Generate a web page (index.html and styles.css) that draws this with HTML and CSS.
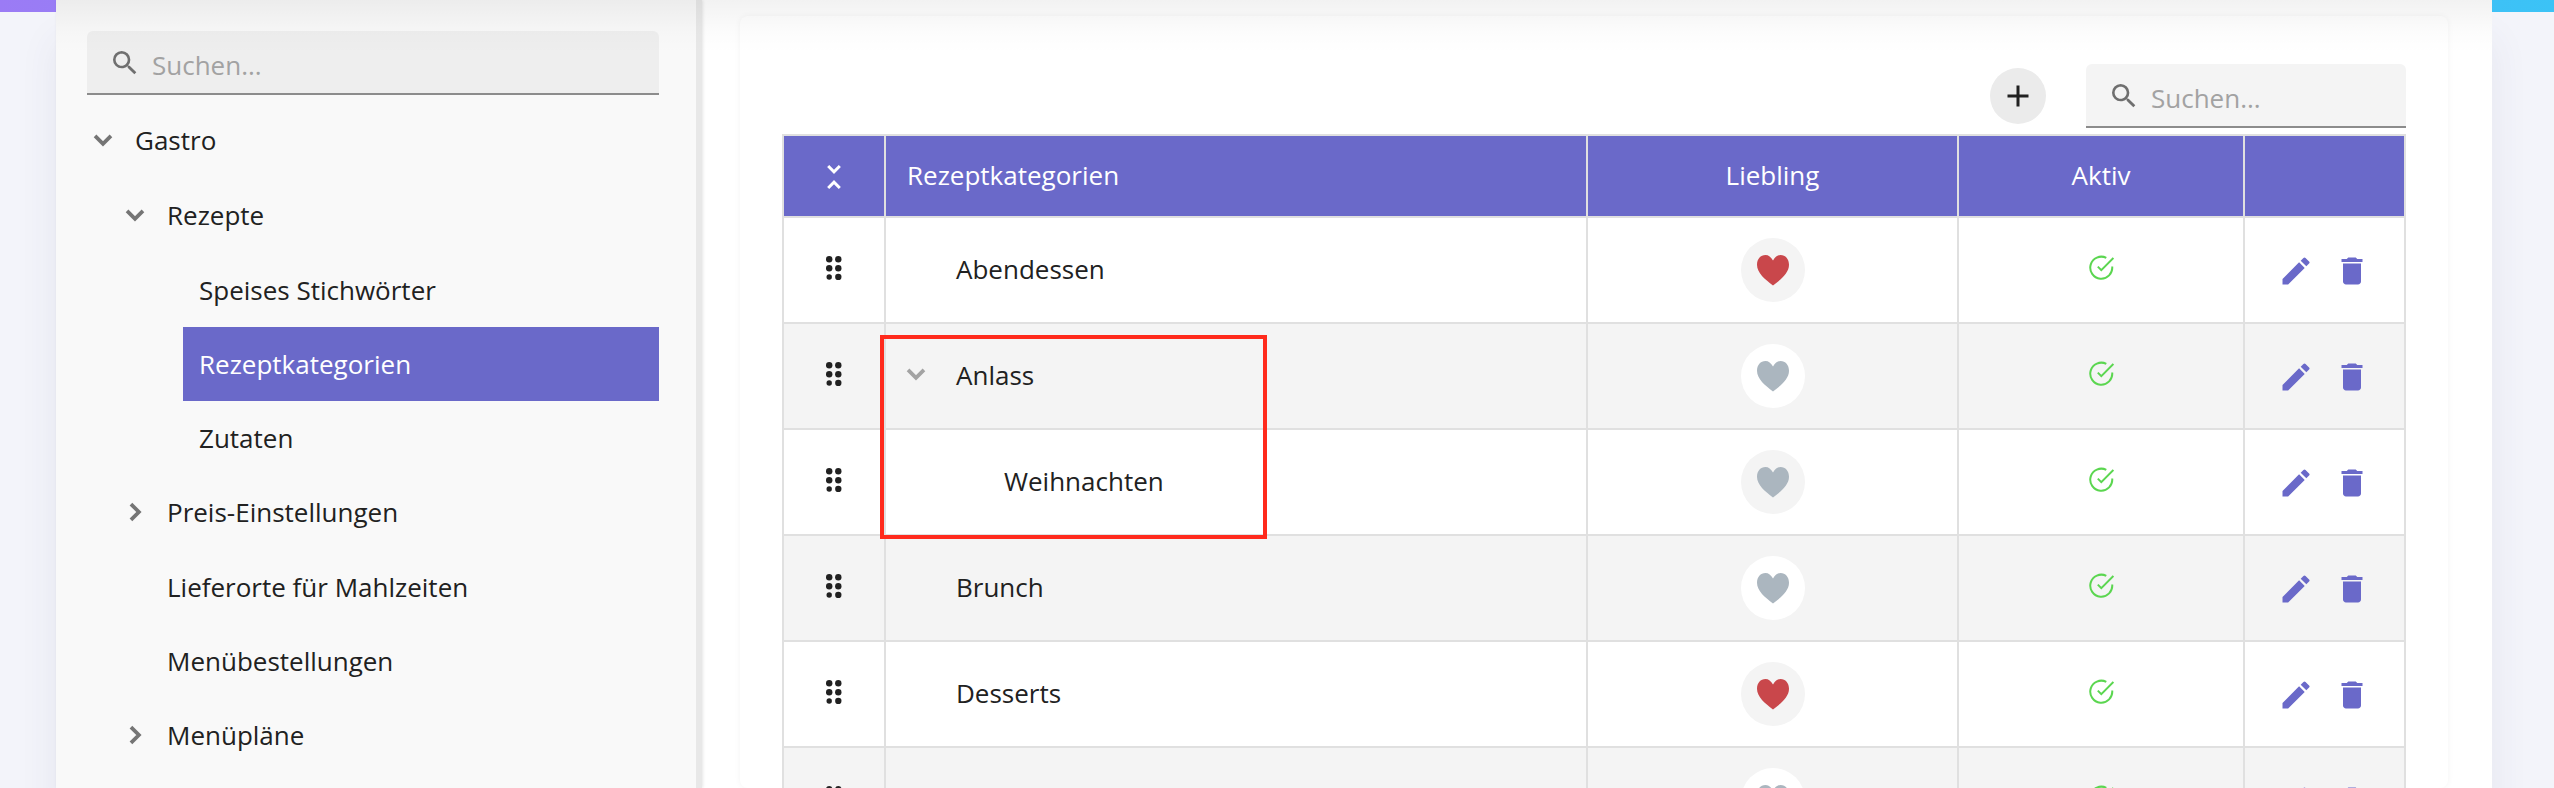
FILE: index.html
```html
<!DOCTYPE html>
<html lang="de">
<head>
<meta charset="utf-8">
<title>Rezeptkategorien</title>
<link rel="stylesheet" href="styles.css">
</head>
<body>
<svg class="sprite" aria-hidden="true">
  <symbol id="search" viewBox="0 0 24 24"><path d="M15.5 14h-.79l-.28-.27A6.471 6.471 0 0 0 16 9.5 6.5 6.5 0 1 0 9.5 16c1.61 0 3.09-.59 4.23-1.57l.27.28v.79l5 4.99L20.49 19l-4.99-5zm-6 0C7.01 14 5 11.99 5 9.5S7.01 5 9.5 5 14 7.01 14 9.5 11.99 14 9.5 14z"/></symbol>
  <symbol id="down" viewBox="0 0 24 24"><path d="M6.700 9.300L12 14.600L17.300 9.300" fill="none" stroke="currentColor" stroke-width="2.500"/></symbol>
  <symbol id="right" viewBox="0 0 24 24"><path d="M9.300 6.700L14.600 12L9.300 17.300" fill="none" stroke="currentColor" stroke-width="2.500"/></symbol>
  <symbol id="plus" viewBox="0 0 24 24"><path d="M19 13h-6v6h-2v-6H5v-2h6V5h2v6h6v2z"/></symbol>
  <symbol id="collapse" viewBox="0 0 24 24"><path d="M7.41 18.59L8.83 20 12 16.83 15.17 20l1.41-1.41L12 14l-4.59 4.59zm9.18-13.18L15.17 4 12 7.17 8.83 4 7.41 5.41 12 10l4.59-4.59z"/></symbol>
  <symbol id="grip" viewBox="0 0 16 24"><circle cx="3.2" cy="3.2" r="3.2"/><circle cx="12.3" cy="3.2" r="3.2"/><circle cx="3.2" cy="12.2" r="3.2"/><circle cx="12.3" cy="12.2" r="3.2"/><circle cx="3.2" cy="21" r="2.7"/><circle cx="12.3" cy="21" r="3.2"/></symbol>
  <symbol id="love" viewBox="0 0 32 31"><path d="M16 5.5C14 2 11.5 0 8.5 0C3.5 0 0 4 0 9.8C0 18 8 24.5 16 30.5C24 24.5 32 18 32 9.8C32 4 28.5 0 23.5 0C20.5 0 18 2 16 5.5Z"/></symbol>
  <symbol id="check" viewBox="0 0 26 26"><path d="M18.3 2.9A11 11 0 1 0 24.2 11.5M9.8 11.6L13.3 15.1L25.4 3" fill="none" stroke="currentColor" stroke-width="2"/></symbol>
  <symbol id="edit" viewBox="0 0 24 24"><path d="M3 17.25V21h3.75L17.81 9.94l-3.75-3.75L3 17.25zM20.71 7.04a1 1 0 0 0 0-1.41l-2.34-2.34a1 1 0 0 0-1.41 0l-1.83 1.83 3.75 3.75 1.83-1.83z"/></symbol>
  <symbol id="trash" viewBox="0 0 24 24"><path d="M6 19c0 1.100.9 2 2 2h8c1.100 0 2-.9 2-2V7H6v12zM19 4h-3.500l-1-1h-5l-1 1H5v2h14V4z"/></symbol>
</svg>

<div class="page">
  <div class="shell">
    <aside class="sidebar">
      <label class="search search-side">
        <svg class="icon-search"><use href="#search"/></svg>
        <input type="text" placeholder="Suchen..." aria-label="Navigation durchsuchen">
      </label>
      <nav>
        <ul class="tree">
          <li>
            <div class="node"><button class="toggle" type="button" aria-label="Gastro zuklappen"><svg class="icon"><use href="#down"/></svg></button><a href="#">Gastro</a></div>
            <ul>
              <li>
                <div class="node"><button class="toggle" type="button" aria-label="Rezepte zuklappen"><svg class="icon"><use href="#down"/></svg></button><a href="#">Rezepte</a></div>
                <ul>
                  <li><a class="leaf" href="#">Speises Stichwörter</a></li>
                  <li><a class="leaf active" href="#" aria-current="page">Rezeptkategorien</a></li>
                  <li><a class="leaf" href="#">Zutaten</a></li>
                </ul>
              </li>
              <li><div class="node"><button class="toggle" type="button" aria-label="Preis-Einstellungen aufklappen"><svg class="icon"><use href="#right"/></svg></button><a href="#">Preis-Einstellungen</a></div></li>
              <li><a class="leaf" href="#">Lieferorte für Mahlzeiten</a></li>
              <li><a class="leaf" href="#">Menübestellungen</a></li>
              <li><div class="node"><button class="toggle" type="button" aria-label="Menüpläne aufklappen"><svg class="icon"><use href="#right"/></svg></button><a href="#">Menüpläne</a></div></li>
            </ul>
          </li>
        </ul>
      </nav>
    </aside>

    <main class="main">
      <section class="card">
        <div class="toolbar">
          <button class="add" type="button" aria-label="Hinzufügen"><svg class="icon"><use href="#plus"/></svg></button>
          <label class="search search-table">
            <svg class="icon-search"><use href="#search"/></svg>
            <input type="text" placeholder="Suchen..." aria-label="Tabelle durchsuchen">
          </label>
        </div>
        <div class="table-wrap">
          <table>
            <colgroup><col class="col-grip"><col><col class="col-fav"><col class="col-active"><col class="col-actions"></colgroup>
            <thead>
              <tr>
                <th><button class="plain" type="button" aria-label="Alle zuklappen"><svg class="icon"><use href="#collapse"/></svg></button></th>
                <th class="name">Rezeptkategorien</th>
                <th>Liebling</th>
                <th>Aktiv</th>
                <th></th>
              </tr>
            </thead>
            <tbody>
              <tr>
                <td><svg class="grip"><use href="#grip"/></svg></td>
                <td class="name"><div class="entry">Abendessen</div></td>
                <td><button class="fav on" type="button" aria-label="Liebling"><svg><use href="#love"/></svg></button></td>
                <td><svg class="check"><use href="#check"/></svg></td>
                <td><div class="actions"><button class="plain" type="button" aria-label="Bearbeiten"><svg class="icon"><use href="#edit"/></svg></button><button class="plain" type="button" aria-label="Löschen"><svg class="icon"><use href="#trash"/></svg></button></div></td>
              </tr>
              <tr>
                <td><svg class="grip"><use href="#grip"/></svg></td>
                <td class="name"><div class="entry parent"><button class="plain expand" type="button" aria-label="Anlass zuklappen"><svg class="icon"><use href="#down"/></svg></button>Anlass</div></td>
                <td><button class="fav" type="button" aria-label="Liebling"><svg><use href="#love"/></svg></button></td>
                <td><svg class="check"><use href="#check"/></svg></td>
                <td><div class="actions"><button class="plain" type="button" aria-label="Bearbeiten"><svg class="icon"><use href="#edit"/></svg></button><button class="plain" type="button" aria-label="Löschen"><svg class="icon"><use href="#trash"/></svg></button></div></td>
              </tr>
              <tr>
                <td><svg class="grip"><use href="#grip"/></svg></td>
                <td class="name"><div class="entry child">Weihnachten</div></td>
                <td><button class="fav" type="button" aria-label="Liebling"><svg><use href="#love"/></svg></button></td>
                <td><svg class="check"><use href="#check"/></svg></td>
                <td><div class="actions"><button class="plain" type="button" aria-label="Bearbeiten"><svg class="icon"><use href="#edit"/></svg></button><button class="plain" type="button" aria-label="Löschen"><svg class="icon"><use href="#trash"/></svg></button></div></td>
              </tr>
              <tr>
                <td><svg class="grip"><use href="#grip"/></svg></td>
                <td class="name"><div class="entry">Brunch</div></td>
                <td><button class="fav" type="button" aria-label="Liebling"><svg><use href="#love"/></svg></button></td>
                <td><svg class="check"><use href="#check"/></svg></td>
                <td><div class="actions"><button class="plain" type="button" aria-label="Bearbeiten"><svg class="icon"><use href="#edit"/></svg></button><button class="plain" type="button" aria-label="Löschen"><svg class="icon"><use href="#trash"/></svg></button></div></td>
              </tr>
              <tr>
                <td><svg class="grip"><use href="#grip"/></svg></td>
                <td class="name"><div class="entry">Desserts</div></td>
                <td><button class="fav on" type="button" aria-label="Liebling"><svg><use href="#love"/></svg></button></td>
                <td><svg class="check"><use href="#check"/></svg></td>
                <td><div class="actions"><button class="plain" type="button" aria-label="Bearbeiten"><svg class="icon"><use href="#edit"/></svg></button><button class="plain" type="button" aria-label="Löschen"><svg class="icon"><use href="#trash"/></svg></button></div></td>
              </tr>
              <tr>
                <td><svg class="grip"><use href="#grip"/></svg></td>
                <td class="name"></td>
                <td><button class="fav" type="button" aria-label="Liebling"><svg><use href="#love"/></svg></button></td>
                <td><svg class="check"><use href="#check"/></svg></td>
                <td><div class="actions"><button class="plain" type="button" aria-label="Bearbeiten"><svg class="icon"><use href="#edit"/></svg></button><button class="plain" type="button" aria-label="Löschen"><svg class="icon"><use href="#trash"/></svg></button></div></td>
              </tr>
            </tbody>
          </table>
          <div class="marker"></div>
        </div>
      </section>
    </main>
  </div>
</div>
</body>
</html>
```
FILE: styles.css
```css
* { box-sizing: border-box; }

body {
  margin: 0;
  font-family: "Open Sans", "Noto Sans", sans-serif;
  font-size: 26px;
  line-height: 36px;
  color: #212121;
}

.sprite { display: none; }

svg { display: block; fill: currentColor; }

a { color: inherit; text-decoration: none; }

button {
  border: 0;
  padding: 0;
  background: none;
  color: inherit;
  font: inherit;
  cursor: pointer;
}

.icon { width: 36px; height: 36px; flex: none; }

.page {
  height: 100vh;
  overflow: hidden;
  padding: 0 62px 0 56px;
  background: linear-gradient(90deg, #9b7bf5, #3bc3f6) top / 100% 12px no-repeat, #f3f4fa;
}

.shell {
  position: relative;
  display: flex;
  height: 100%;
  background: #fff;
  box-shadow: 0 40px 36px rgba(60, 60, 110, 0.08);
}

.shell::after {
  content: "";
  position: absolute;
  inset: 0 0 auto;
  height: 54px;
  background: linear-gradient(rgba(0, 0, 0, 0.05), rgba(0, 0, 0, 0.01) 60%, transparent);
  pointer-events: none;
}

.sidebar {
  flex: 0 0 646px;
  padding: 31px 37px 0 31px;
  background: #f9f9f9;
  border-right: 6px solid #e8e8e8;
  box-shadow: 1px 0 3px rgba(0, 0, 0, 0.1);
}

.search {
  display: flex;
  align-items: center;
  gap: 11px;
  height: 64px;
  padding: 0 22px;
  border-bottom: 2px solid #8c8c8c;
  border-radius: 6px 6px 0 0;
}

.search-side { background: #eee; }
.search-table { width: 320px; background: #f4f4f4; }

.icon-search { width: 32px; height: 34px; padding-top: 2px; flex: none; color: #6f6f6f; }

.search input {
  flex: 1;
  min-width: 0;
  border: 0;
  padding: 6px 0 0;
  background: none;
  font: inherit;
  color: inherit;
  outline: 0;
}

.search input::placeholder { color: #a2a2a2; opacity: 1; }

.tree, .tree ul { margin: 0; padding: 0; list-style: none; }
.tree { padding-top: 8px; }
.tree ul { padding-left: 32px; }

.node { display: flex; align-items: center; gap: 16px; height: 75px; padding-bottom: 2px; }

.toggle {
  display: flex;
  justify-content: center;
  width: 32px;
  color: #757575;
}

.leaf {
  display: flex;
  align-items: center;
  height: 74px;
  margin-left: 32px;
  padding-left: 16px;
}

.leaf.active { background: #6a69c9; color: #fff; }

.main { flex: 1; min-width: 0; padding: 16px 44px 0 38px; }

.card {
  height: 100%;
  padding: 48px 42px 0;
  border-radius: 8px;
  box-shadow: 0 0 6px rgba(0, 0, 0, 0.05);
}

.toolbar {
  display: flex;
  align-items: center;
  justify-content: flex-end;
  gap: 40px;
  padding-bottom: 6px;
}

.add {
  display: flex;
  align-items: center;
  justify-content: center;
  width: 56px;
  height: 56px;
  border-radius: 50%;
  background: #ebebeb;
}

.table-wrap { position: relative; }

table { width: 100%; table-layout: fixed; border-collapse: collapse; }

.col-grip { width: 102px; }
.col-fav { width: 371px; }
.col-active { width: 286px; }
.col-actions { width: 161px; }

th, td { padding: 0; border: 2px solid #e0e0e0; text-align: center; vertical-align: middle; }
th { height: 82px; padding-bottom: 2px; background: #6a69c9; color: #fff; font-weight: 400; }
td { height: 106px; background: #fff; }
tbody tr:nth-child(even) td { background: #f4f4f4; }

th svg, td svg { margin: 0 auto; }
th.name { padding-left: 21px; text-align: left; }
td.name { text-align: left; }

.plain { display: inline-block; vertical-align: middle; }

.entry { display: flex; align-items: center; padding: 0 0 2px 70px; }
.entry.parent { gap: 22px; padding-left: 12px; }
.entry.child { padding-left: 118px; }
.expand { padding-bottom: 2px; color: #a3a3a3; }

td .grip { width: 16px; height: 24px; margin-bottom: 4px; }
td .check { width: 26px; height: 26px; margin-bottom: 4px; color: #5bd650; }

.fav {
  display: inline-flex;
  align-items: center;
  width: 64px;
  height: 64px;
  border-radius: 50%;
  background: #f4f4f4;
  color: #abb6bf;
  vertical-align: middle;
}

.fav svg { width: 32px; height: 31px; }
.fav.on { color: #c9474b; }
tbody tr:nth-child(even) .fav { background: #fff; }

.actions { display: flex; justify-content: center; gap: 20px; padding: 2px 2px 0 0; color: #6a69c9; }

/* highlight frame drawn over the nested category */
.marker {
  position: absolute;
  top: 201px;
  left: 98px;
  width: 387px;
  height: 204px;
  border: 4px solid #ff2a1c;
  pointer-events: none;
}
```
